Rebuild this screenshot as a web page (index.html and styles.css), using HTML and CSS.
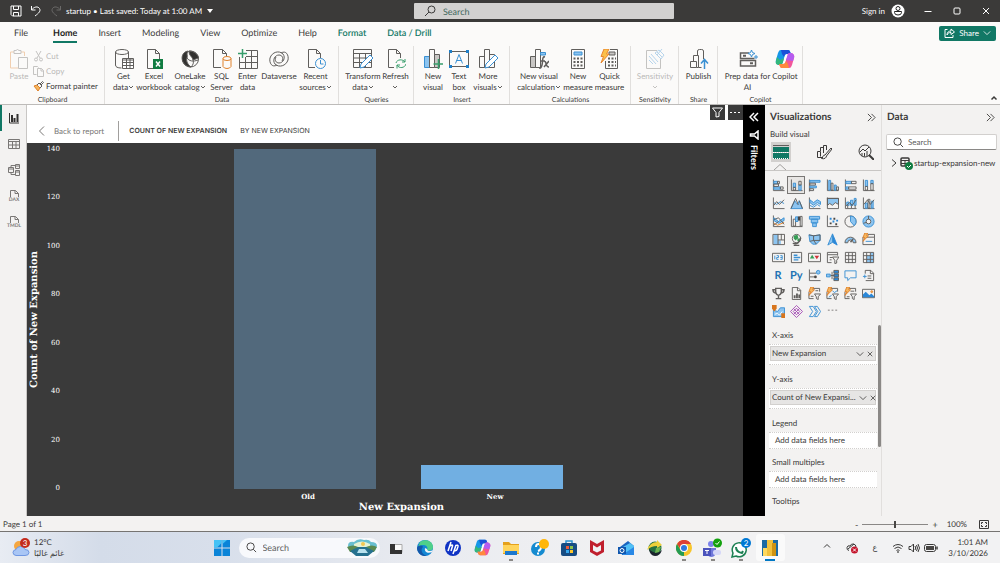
FILE: index.html
```html
<!DOCTYPE html>
<html lang="en">
<head>
  <meta charset="UTF-8">
  <title>startup - Power BI Desktop</title>
  <link rel="stylesheet" href="styles.css">
</head>
<body>
  <!-- shared icon shapes -->
  <svg class="defs" aria-hidden="true">
    <symbol id="chev" viewBox="0 0 6 6"><path d="M1 2l2 2 2-2"/></symbol>
    <symbol id="chev-l" viewBox="0 0 10 10"><path d="M1 3l4 4 4-4"/></symbol>
    <symbol id="cross" viewBox="0 0 8 8"><path d="M1 1l6 6M7 1l-6 6"/></symbol>
    <symbol id="right2" viewBox="0 0 10 10"><path d="M1 1l4 4-4 4M5 1l4 4-4 4"/></symbol>
    <symbol id="lens" viewBox="0 0 12 12"><circle cx="5" cy="5" r="4"/><path d="M8 8l3 3"/></symbol>
    <symbol id="page" viewBox="0 0 20 20"><path d="M3.500.5h8l4 4v15h-12zM11.500.5v4h4"/></symbol>
    <symbol id="copilot" viewBox="0 0 20 20">
      <path fill="#1597e8" d="M6 1h7c2 0 2 2 3 4h-4c-2 0-2 1-3 4l-1 4c-1 2-1 3-3 3-3 0-5-2-4-5l2-7c1-2 1-3 3-3z"/>
      <path fill="#34b77c" d="M2 8l-1 4c-1 3 1 4 4 4 2 0 2-1 3-3l1-4-4 2z"/>
      <path fill="#1b50d8" d="M6 1h7c2 0 2 2 3 4h-4c-2 0-2 0-3 3L7 5z"/>
      <path fill="#f2569b" d="M14 19H7c-2 0-2-2-3-4h4c2 0 2-1 3-4l1-4c1-2 1-3 3-3 3 0 5 2 4 5l-2 7c-1 2-1 3-3 3z"/>
      <path fill="#b55cf0" d="M12 7c1-2 1-3 3-3 3 0 5 2 4 5l-1 3-7-1z"/>
      <path fill="#ff8a3c" d="M14 19H7c-2 0-2-2-3-4h4c2 0 2-1 3-3l2 3z"/>
      <path fill="#fff" d="M11 6h1.500l-3 8H8z"/>
    </symbol>
    <symbol id="ax" viewBox="0 0 14 14"><path d="M1.500.5v12h12"/></symbol>
  </svg>

  <header class="titlebar">
    <div class="quick">
      <button aria-label="Save"><svg class="ic" width="12" height="12" viewBox="0 0 12 12"><path d="M1 1h10v10H2.500L1 9.500zM3.500 1v3.500h5V1M3.500 11V7.500h5V11"/></svg></button>
      <button aria-label="Undo"><svg class="ic" width="12" height="12" viewBox="0 0 12 12"><path d="M1.500 1v4h4M1.500 5C4 1.500 8 1 9.500 3.500S9 8 5 11"/></svg></button>
      <button aria-label="Redo" class="off"><svg class="ic" width="12" height="12" viewBox="0 0 12 12"><path d="M10.500 1v4h-4M10.500 5C8 1.500 4 1 2.500 3.500S3 8 7 11"/></svg></button>
      <button class="docname">startup • Last saved: Today at 1:00 AM <svg width="6" height="4" viewBox="0 0 6 4"><path fill="#fff" d="M0 0h6L3 4z"/></svg></button>
    </div>
    <label class="topsearch">
      <svg class="ic" width="12" height="12" viewBox="0 0 12 12"><circle cx="7.500" cy="4.500" r="3.500"/><path d="M5 7l-4 4"/></svg>
      <input type="text" placeholder="Search" aria-label="Search">
    </label>
    <div class="window">
      <button class="signin">Sign in
        <svg width="14" height="14" viewBox="0 0 14 14"><circle cx="7" cy="7" r="6.500" fill="#fff"/><g fill="none" stroke="#222"><circle cx="7" cy="4.500" r="2"/><path d="M3.500 7.500h7v1q0 2.500-3.500 2.500T3.500 8.500z"/></g></svg>
      </button>
      <button aria-label="Minimize"><svg class="ic" width="8" height="8" viewBox="0 0 8 8"><path d="M.5 4.500h7"/></svg></button>
      <button aria-label="Maximize"><svg class="ic" width="8" height="8" viewBox="0 0 8 8"><rect x="1" y="1" width="6" height="6" rx="1"/></svg></button>
      <button aria-label="Close"><svg class="ic" width="8" height="8"><use href="#cross"/></svg></button>
    </div>
  </header>

  <nav class="tabs">
    <a href="#" class="file">File</a>
    <a href="#" class="current">Home</a>
    <a href="#">Insert</a>
    <a href="#">Modeling</a>
    <a href="#">View</a>
    <a href="#">Optimize</a>
    <a href="#">Help</a>
    <a href="#" class="context">Format</a>
    <a href="#" class="context">Data / Drill</a>
    <button class="share">
      <svg class="ic" width="11" height="10" viewBox="0 0 11 10"><path d="M3.500 1.500H1v8h8V7M3 7c0-3 2-4 4-4V1l3.500 3L7 6.500v-2C5 4.500 4 5 3 7z"/></svg>
      Share
      <svg class="ic" width="8" height="8"><use href="#chev-l"/></svg>
    </button>
  </nav>

  <section class="ribbon">
    <div class="group clipboard">
      <div class="tools">
        <button class="off">
          <svg class="ic" width="20" height="20" viewBox="0 0 20 20"><path class="orange" d="M5 3H1.500v16H9M12 3h3.500v4"/><path d="M5 1.500h2q1.500-2 3 0h2v3H5zM9.500 8.500h9v11h-9z"/></svg>
          <span>Paste</span>
        </button>
        <div class="small">
          <button class="off"><svg class="ic" width="11" height="11" viewBox="0 0 11 11"><path d="M3 0l4 7M8 0L4 7"/><circle cx="3" cy="8.500" r="1.500"/><circle cx="8" cy="8.500" r="1.500"/></svg>Cut</button>
          <button class="off"><svg class="ic" width="11" height="11" viewBox="0 0 11 11"><path d="M3.500 8.500h-3v-8h4l1 1M4.500 2.500h4l2 2v6h-6zM8 2.500v2.500h2.500"/></svg>Copy</button>
          <button><svg class="ic" width="11" height="11" viewBox="0 0 11 11"><path class="orange forange" d="M1 5l3-1 3 3-2 3z"/><path d="M4 4l2-2 3 3-2 2M7 3l2.500-2.500 1 1L8 4"/></svg>Format painter</button>
        </div>
      </div>
      <p>Clipboard</p>
    </div>

    <div class="group data">
      <div class="tools">
        <button><svg class="ic" width="20" height="20" viewBox="0 0 20 20"><ellipse cx="8" cy="3" rx="6.500" ry="2.500"/><path d="M1.500 3v13q0 3 6 3M14.500 3v6"/><path fill="#fff" d="M8.500 9.500h11v10h-11z"/><path d="M8.500 11h11M8.500 13.500h11M8.500 16.500h11M12.500 10v9M16 10v9"/></svg><span>Get<br>data<svg class="ic" width="6" height="6"><use href="#chev"/></svg></span></button>
        <button><svg class="ic" width="20" height="20" viewBox="0 0 20 20"><use href="#page"/><path fill="#107c41" stroke="none" d="M9 10h10v10H9z"/><path stroke="#fff" stroke-width="1.500" d="M12 12.500l4 5M16 12.500l-4 5"/></svg><span>Excel<br>workbook</span></button>
        <button><svg class="ic" width="20" height="20" viewBox="0 0 20 20"><circle cx="10.500" cy="10" r="8"/><path fill="#323130" d="M8 2C2 3 1 9 3 13c1 3 5 5 8 5-4-3-5-7-4-9s-1-4 1-7zM9 2c5 0 9 3 9.500 7L13 11c-1-4-4-4-4-9z"/><path d="M7 9c2 3 6 4 11 2M13 11c1 3 0 5-2 7"/></svg><span>OneLake<br>catalog<svg class="ic" width="6" height="6"><use href="#chev"/></svg></span></button>
        <button><svg class="ic" width="20" height="20" viewBox="0 0 20 20"><path d="M9 18.500H1.500V.5h9l4 4V7M10.500.5v4h4"/><g class="orange"><ellipse cx="15" cy="9.500" rx="4" ry="2"/><path d="M11 9.500v8q1 2 4 2t4-2v-8"/></g></svg><span>SQL<br>Server</span></button>
        <button><svg class="ic" width="20" height="20" viewBox="0 0 20 20"><path d="M8 1.500h11.500v18H1.500V8M1.500 13.500h18M8 7.500h11.500M7.500 8v11.500M13.500 2v17.500"/><path class="green" stroke-width="1.500" d="M4.500 0v9M0 4.500h9"/></svg><span>Enter<br>data</span></button>
        <button><svg class="ic" width="20" height="20" viewBox="0 0 20 20"><path d="M8 16C3 19 0 14 1 9c2-6 9-8 13-4 3 4 0 9-4 9-3 0-5-3-3-6M12 4c5-3 8 2 7 7-2 6-9 8-13 4-3-4 0-9 4-9 3 0 5 3 3 6"/></svg><span>Dataverse</span></button>
        <button><svg class="ic" width="20" height="20" viewBox="0 0 20 20"><path d="M9 18.500H2.500V.5h8l4 4V9M10.500.5v4h4"/><circle class="blue" cx="14.500" cy="14.500" r="5"/><path class="blue" d="M14.500 11v4h3"/></svg><span>Recent<br>sources<svg class="ic" width="6" height="6"><use href="#chev"/></svg></span></button>
      </div>
      <p>Data</p>
    </div>

    <div class="group queries">
      <div class="tools">
        <button><svg class="ic" width="20" height="20" viewBox="0 0 20 20"><path d="M.5.5h18v18H.5zM.5 4.500h18M.5 9h18M.5 13.500h18M6.500 4v14M12.500 4v14"/><path class="blue" fill="#fff" d="M7 19l1-4 9-9 3 3-9 9z"/></svg><span>Transform<br>data<svg class="ic" width="6" height="6"><use href="#chev"/></svg></span></button>
        <button><svg class="ic" width="20" height="20" viewBox="0 0 20 20"><path d="M8 18.500H2.500V.5h8l4 4V9M10.500.5v4h4"/><path class="green" d="M10 14c1-4 7-4 9-1V10M19 13h-3M20 15c-1 4-7 5-9 1v3.500M11 16h3"/></svg><span>Refresh<br><svg class="ic" width="6" height="6"><use href="#chev"/></svg></span></button>
      </div>
      <p>Queries</p>
    </div>

    <div class="group insert">
      <div class="tools">
        <button><svg class="ic" width="20" height="20" viewBox="0 0 20 20"><path class="blue fblue" d="M1.500 7.500h5v11h-5z"/><path d="M6.500.5h5v18h-5z"/><path fill="#c8c6c4" d="M11.500 5.500h5v13h-5z"/><path class="green" stroke-width="1.500" d="M15.500 10v10M10.500 15h10"/></svg><span>New<br>visual</span></button>
        <button><svg class="ic" width="20" height="20" viewBox="0 0 20 20"><path d="M.5 2.500h19v15H.5z"/><path class="blue" d="M6.500 14.500l3.500-9 3.500 9M7.500 11.500h5"/><path fill="#1f7fc8" stroke="none" d="M0 1h3v3H0zM17 1h3v3h-3zM0 16h3v3H0zM17 16h3v3h-3z"/></svg><span>Text<br>box</span></button>
        <button><svg class="ic" width="20" height="20" viewBox="0 0 20 20"><path d="M1.500 7.500h5v11h-5zM6.500.5h5v18h-5zM11.500 5.500h5v13h-5z"/><path class="blue" fill="#fff" d="M7 19l1-4 9-9 3 3-9 9z"/></svg><span>More<br>visuals<svg class="ic" width="6" height="6"><use href="#chev"/></svg></span></button>
      </div>
      <p>Insert</p>
    </div>

    <div class="group calc">
      <div class="tools">
        <button><svg class="ic" width="20" height="20" viewBox="0 0 20 20"><path fill="#c8c6c4" d="M1.500 7.500h5v11h-5z"/><path d="M6.500.5h5v18h-5z"/><path class="blue fblue" d="M11.500 3.500h5V6h-5z"/><path stroke-width="1.500" d="M16 8c-3-1-2 4-3 8s-2 3-3 3M11 12h5M15 12c3 0 1 6 5 6M20 12l-5 6"/></svg><span>New visual<br>calculation<svg class="ic" width="6" height="6"><use href="#chev"/></svg></span></button>
        <button><svg class="ic" width="20" height="20" viewBox="0 0 20 20"><path d="M3.500.5h13v19h-13z"/><path class="fblue blue" d="M6 3h8v3H6z"/><path stroke-width="2" stroke-dasharray="2 1.500" d="M5.500 9.500h9M5.500 13h9M5.500 16.500h9"/></svg><span>New<br>measure</span></button>
        <button><svg class="ic" width="20" height="20" viewBox="0 0 20 20"><path d="M10 .5h7.500v19h-12V12"/><path fill="#c8c6c4" d="M9 3h6v3H9z"/><path stroke-width="2" stroke-dasharray="2 1.500" d="M8 9.500h8M8 13h8M8 16.500h8"/><path fill="#fbc04a" stroke="#e8862e" d="M4 0h5L6.500 5H9l-8 9 2.500-6.500H1z"/></svg><span>Quick<br>measure</span></button>
      </div>
      <p>Calculations</p>
    </div>

    <div class="group sens">
      <div class="tools">
        <button class="off"><svg class="ic" width="20" height="20" viewBox="0 0 20 20"><path d="M12 1.500H1.500v18h14V10"/><path class="blue" d="M4 7l7 8M6 5l7 8M4 11l4 4M10 4l4-3 5 5-3 4zM12 3l5 5M14 1l5 5M17 0l-5 6"/></svg><span>Sensitivity<br><svg class="ic" width="6" height="6"><use href="#chev"/></svg></span></button>
      </div>
      <p>Sensitivity</p>
    </div>

    <div class="group pub">
      <div class="tools">
        <button><svg class="ic" width="20" height="20" viewBox="0 0 20 20"><path d="M1.500 12.500h6v6h-6zM4.500 12V6.500h5v12h-2M8.500 6V2q0-1.500 2-1.500h2q2 0 2 1.500v8M9.500 18.500h3"/><path class="blue" stroke-width="1.500" d="M15.500 20v-9M12 14.500l3.500-4 3.500 4"/></svg><span>Publish</span></button>
      </div>
      <p>Share</p>
    </div>

    <div class="group cop">
      <div class="tools">
        <button><svg class="ic" width="20" height="20" viewBox="0 0 20 20"><path stroke-width="1.500" d="M11 4H2.500v5.500h14M2.500 11.500h15V17h-15z"/><path d="M5 6.800h3M12 14.200h3" stroke-width="2"/><path class="blue" d="M13.500 1l1 2.500L17 4.500l-2.500 1-1 2.500-1-2.500-2.500-1 2.500-1zM18 6v4M16 8h4"/></svg><span>Prep data for<br>AI</span></button>
        <button><svg width="20" height="20"><use href="#copilot"/></svg><span>Copilot</span></button>
      </div>
      <p>Copilot</p>
    </div>
    <button class="collapse" aria-label="Collapse ribbon"><svg class="ic" width="8" height="8" viewBox="0 0 8 8"><path stroke-width="1.500" d="M1.500 5.500L4 3l2.500 2.500"/></svg></button>
  </section>

  <main class="workspace">
    <nav class="views">
      <a href="#" class="on" aria-label="Report view"><svg class="ic" width="12" height="12" viewBox="0 0 12 12"><path d="M1.500 1v10H11"/><path stroke-width="2" d="M4 3v7M6.500 6v4M9.500 2v8"/></svg></a>
      <a href="#" aria-label="Table view"><svg class="ic" width="12" height="12" viewBox="0 0 12 12"><path d="M.5 1.500h11v9H.5zM.5 3.500h11M.5 7h11M4.500 3v8M8 3v8"/></svg></a>
      <a href="#" aria-label="Model view"><svg class="ic" width="12" height="12" viewBox="0 0 12 12"><path d="M.5 3.500h5v5h-5zM.5 5h5M7.500.5h4v4h-4zM7.500 2h4M7.500 6.500h4v5h-4zM7.500 8h4M3 3V1.500h4M3 9v1.500h4"/></svg></a>
      <a href="#" aria-label="DAX query view"><svg class="ic" width="12" height="8" viewBox="0 0 12 8"><path d="M2.500 7V.5h5l3 3V7M7 .5v3h3.500"/></svg><b>DAX</b></a>
      <a href="#" aria-label="TMDL view"><svg class="ic" width="12" height="8" viewBox="0 0 12 8"><path d="M2.500 7V.5h5l3 3V7M7 .5v3h3.500"/></svg><b>TMDL</b></a>
    </nav>

    <section class="report">
      <div class="focusbar">
        <button class="back"><svg class="ic" width="8" height="10" viewBox="0 0 8 10"><path d="M6 .5L1.500 5 6 9.500"/></svg>Back to report</button>
        <h1>COUNT OF NEW EXPANSION</h1>
        <h2>BY NEW EXPANSION</h2>
        <div class="visual-tools">
          <button aria-label="Filters on visual"><svg class="ic" width="11" height="11" viewBox="0 0 11 11"><path d="M.5 1h10L7 5.500v4L4 10V5.500z"/></svg></button>
          <button aria-label="More options"><svg width="11" height="11" viewBox="0 0 11 11"><path fill="#fff" d="M0 5h2v1H0zM4 5h2v1H4zM8 5h2v1H8z"/></svg></button>
        </div>
      </div>
      <div class="chart">
        <div class="ytitle">Count of New Expansion</div>
        <ol class="ticks"><li>140</li><li>120</li><li>100</li><li>80</li><li>60</li><li>40</li><li>20</li><li>0</li></ol>
        <div class="plot">
          <div class="bar dim" style="height:100%"></div>
          <div class="bar" style="height:7.14%"></div>
        </div>
        <div class="xlabels"><span>Old</span><span>New</span></div>
        <div class="xtitle">New Expansion</div>
      </div>
    </section>

    <aside class="filters">
      <button aria-label="Expand filters"><svg class="ic" width="10" height="10" viewBox="0 0 10 10"><path stroke-width="1.500" d="M5 1L1 5l4 4M9 1L5 5l4 4"/></svg></button>
      <svg class="ic" width="10" height="10" viewBox="0 0 10 10"><path stroke-width="1.500" d="M9 1v8L5.500 6H1.500V4h4z"/></svg>
      <h3>Filters</h3>
    </aside>

    <aside class="viz">
      <div class="panehead"><h3>Visualizations</h3><button aria-label="Collapse"><svg class="ic" width="9" height="9"><use href="#right2"/></svg></button></div>
      <h4>Build visual</h4>
      <div class="modes">
        <button class="on" aria-label="Build visual"><svg width="16" height="16" viewBox="0 0 16 16"><path fill="#117865" d="M0 3h16v5H0zM0 9h16v6H0z"/><path stroke="#605e5c" d="M0 1.500h16"/><path stroke="#fff" stroke-dasharray="1 1" d="M0 8.500h16M0 14.500h16"/></svg></button>
        <button aria-label="Format visual"><svg class="ic" width="16" height="16" viewBox="0 0 16 16"><path d="M7 13.500H1.500v-6h3v5M4.500 7V3.500h3V9M7.500 5V1.500h3V6M15 4L9 11c-2 0-2 2-3.500 3.500 3 1 5-1 5-2.500L16 5z"/></svg></button>
        <button aria-label="Analytics"><svg class="ic" width="16" height="16" viewBox="0 0 16 16"><circle cx="7" cy="7" r="6"/><path d="M2 8l3-3 2 2 4-4M4 12V9M6.500 12.500V9M9 12V7"/><path stroke-width="2" d="M11 11l5 5"/></svg></button>
      </div>
      <svg class="notch ic" width="18" height="6" viewBox="0 0 18 6"><path fill="#f3f2f1" d="M3 6l6-5.500L15 6"/></svg>
      <div class="gallery">
        <button><svg class="ic" viewBox="0 0 14 14"><use href="#ax"/><path class="fblue blue" d="M2 2.500h4v2.500H2zM2 8.500h7V11H2z"/><path d="M6 2.500h2V5H6zM2 5.500h5V8H2zM9 8.500h3V11H9z"/></svg></button>
        <button class="on"><svg class="ic" viewBox="0 0 14 14"><use href="#ax"/><path class="fblue blue" d="M3.500 4.500H6V9H3.500zM9.500 6.500H12V12H9.500z"/><path d="M3.500 9H6v3H3.500zM9.500 2.500H12v4H9.500z"/></svg></button>
        <button><svg class="ic" viewBox="0 0 14 14"><path d="M1.500.5v13"/><path class="fblue blue" d="M2 1.500h11v2H2zM2 7.500h7v2H2z"/><path d="M2 4.500h6v2H2zM2 10.500h4v2H2z"/></svg></button>
        <button><svg class="ic" viewBox="0 0 14 14"><use href="#ax"/><path class="fblue blue" d="M3 1.500h2V12H3zM9 6.500h2V12H9z"/><path d="M5.500 4.500h2V12h-2zM11.500 8.500h2V12h-2z"/></svg></button>
        <button><svg class="ic" viewBox="0 0 14 14"><use href="#ax"/><path class="fblue blue" d="M2 2.500h6V5H2zM2 8.500h3V11H2z"/><path d="M8 2.500h5V5H8zM5 8.500h8V11H5z"/></svg></button>
        <button><svg class="ic" viewBox="0 0 14 14"><use href="#ax"/><path class="fblue blue" d="M3.500 1.500H6V8H3.500zM9.500 1.500H12V5H9.500z"/><path d="M3.500 8H6v4H3.500zM9.500 5H12v7H9.500z"/></svg></button>

        <button><svg class="ic" viewBox="0 0 14 14"><use href="#ax"/><path class="blue" d="M2 6l3 2 4-3 4 2"/><path d="M2 9l3-4 3 3 5-5"/></svg></button>
        <button><svg class="ic" viewBox="0 0 14 14"><path class="fblue blue" d="M1 12.500L5 4l3 4 2-4 3.500 8.500z"/><path d="M1 12.500L6 1.500l3 7M13.500 12.500L10 4"/></svg></button>
        <button><svg class="ic" viewBox="0 0 14 14"><use href="#ax"/><path class="fblue blue" d="M2 3l4 3 4-3 3.500 2v3L10 6 6 9 2 6z"/><path class="blue" d="M2 9l4 2 4-3 3 2"/></svg></button>
        <button><svg class="ic" viewBox="0 0 14 14"><path class="fblue" d="M1.500 1.500h12V8L10 6l-3 3-3-2-2.500 2z"/><use href="#ax"/><path d="M1 1.500h12.500v11"/></svg></button>
        <button><svg class="ic" viewBox="0 0 14 14"><use href="#ax"/><path class="fblue blue" d="M3 5.500h2.500V9H3zM7 3.500h2.500V9H7zM11 1.500h2V9h-2z"/><path d="M2 10l4-4 3 3 4-6M4 9v3M8 9v3M12 9v3"/></svg></button>
        <button><svg class="ic" viewBox="0 0 14 14"><use href="#ax"/><path class="fblue blue" d="M3.500 6.500H6V12H3.500zM10 4.500h2V12h-2z"/><path d="M6.500 2.500h2V12h-2zM2 8l4-5 3 5 4-5"/></svg></button>

        <button><svg class="ic" viewBox="0 0 14 14"><use href="#ax"/><path class="fblue blue" d="M2 3l5 4 6-4v3L7 9 2 6z"/><path class="orange" d="M2 9l4 2 7-3"/><path d="M2 5l5-2 6 7M2 11l5-4"/></svg></button>
        <button><svg class="ic" viewBox="0 0 14 14"><use href="#ax"/><path d="M3.500 4.500H6V12H3.500zM11 1.500h2V12h-2z"/><path class="fblue blue" d="M6 2h2.500v5H6z"/><path class="solid" d="M8.500 1.500H11V6H8.500z"/></svg></button>
        <button><svg class="ic" viewBox="0 0 14 14"><path class="fblue blue" d="M1.500 1.500h11v3h-11zM3.500 4.500h7v4h-7zM5 8.500h4v4H5z"/></svg></button>
        <button><svg class="ic" viewBox="0 0 14 14"><use href="#ax"/><path class="solid" d="M4 8h2v2H4zM8 3h2v2H8zM10 9h2v2h-2z"/><path fill="#2b88d8" stroke="none" d="M4 3h2v2H4zM7 6h2v2H7zM11 5h2v2h-2z"/></svg></button>
        <button><svg class="ic" viewBox="0 0 14 14"><circle cx="7" cy="7" r="6"/><path class="fblue blue" d="M7 7V1a6 6 0 0 1 4 10.500z"/></svg></button>
        <button><svg class="ic" viewBox="0 0 14 14"><circle class="fblue blue" cx="7" cy="7" r="6"/><circle cx="7" cy="7" r="2.500" fill="#f3f2f1"/><path d="M7 1v3.500M1.500 9l3-1"/></svg></button>

        <button><svg class="ic" viewBox="0 0 14 14"><path class="fblue" stroke="none" d="M1.500 1.500h5v11h-5zM6.500 8h3v4.500h-3z"/><path d="M1 1.500h12.500v11H1zM6.500 1v11.500M6.500 7.500h7M10 1v6.500"/></svg></button>
        <button><svg class="ic" viewBox="0 0 14 14"><circle cx="7" cy="6" r="4.500"/><path fill="#379d55" stroke="none" d="M4 3l4-1 1 3-3 3-2-2zM8 6l3 0-1 3-2 0z"/><path stroke-width="1.500" d="M3 11c4 2 8-1 8.500-6M4 13.500h6"/></svg></button>
        <button><svg class="ic" viewBox="0 0 14 14"><path class="fblue blue" d="M1 2l5 1 7-1v6l-4 4H5L2 9z"/><path d="M1 2l5 1v5l-4 1M6 3l7-1v6H6l3 4"/></svg></button>
        <button><svg class="ic" viewBox="0 0 14 14"><path fill="#2b88d8" stroke="#2b88d8" d="M7 1l5 12-5-3z"/><path class="fblue blue" d="M7 1L2 13l5-3z"/></svg></button>
        <button><svg class="ic" viewBox="0 0 14 14"><path class="fblue" d="M1 10.500a6 6 0 0 1 12 0h-3a3 3 0 0 0-6 0z"/><path stroke-width="1.500" d="M7 10l3-4"/></svg></button>
        <button><svg class="ic" viewBox="0 0 14 14"><path d="M1 4.500h12.500v8H1zM6 1.500h7.500v3"/><path class="blue" d="M4 9h7"/><path class="orange forange" d="M3 0h3L5 3h2L1 9l2-4H1z"/></svg></button>

        <button><svg class="ic" viewBox="0 0 14 14"><path d="M.5 2.500h13v9H.5z"/><path class="blue" d="M3 5v4M5 5h2v2H5v2h2M9 5h2v4H9M9 7h2"/></svg></button>
        <button><svg class="ic" viewBox="0 0 14 14"><path d="M1.500 1.500h11v11h-11z"/><path class="blue" stroke-width="1.500" d="M4 4.500h4M4 7h7M4 9.500h5"/></svg></button>
        <button><svg class="ic" viewBox="0 0 14 14"><path d="M.5 2.500h13v9H.5z"/><path fill="#379d55" stroke="none" d="M2 8l2.500-4L7 8z"/><path fill="#d13438" stroke="none" d="M7 5h5L9.500 9z"/></svg></button>
        <button><svg class="ic" viewBox="0 0 14 14"><path d="M6 12.500H1.500v-11h11V5M2 4h10M4 7h3M4 9.500h2M7 6.500h7L11.500 10v3l-2 .5V10z"/></svg></button>
        <button><svg class="ic" viewBox="0 0 14 14"><path d="M1.500 1.500h11v11h-11zM1.500 5h11M1.500 9h11M5 2v11M9 2v11"/></svg></button>
        <button><svg class="ic" viewBox="0 0 14 14"><path class="fblue" stroke="none" d="M5 5h4v7.500H5zM9 1.500h3.500v11H9z"/><path d="M1.500 1.500h11v11h-11zM1.500 5h11M1.500 9h11M5 2v11M9 2v11"/></svg></button>

        <button class="letter">R</button>
        <button class="letter">Py</button>
        <button><svg class="ic" viewBox="0 0 14 14"><use href="#ax"/><path d="M2 4.500h7M2 8.500h5"/><circle class="fblue blue" cx="11" cy="3.500" r="2"/><circle class="solid" cx="8" cy="8.500" r="1.500"/></svg></button>
        <button><svg class="ic" viewBox="0 0 14 14"><path class="fblue blue" d="M.5 5.500h4v3h-4z"/><path fill="#2b88d8" d="M8.500 1.500h5v3h-5zM8.500 5.500h5v3h-5zM8.500 9.500h5v3h-5z"/><path d="M5 7h4M6.500 3v8"/></svg></button>
        <button><svg class="ic" viewBox="0 0 14 14"><path class="blue" d="M1 2h12v7.500H7L4 12.500v-3H1z"/></svg></button>
        <button><svg class="ic" viewBox="0 0 14 14"><path d="M4 12.500h8.500v-8l-3-3h-6V5M9 1.500v3.500h3.500M6 7.500h4M6 10h4"/><path class="blue" d="M1 8h4M3 6v4"/></svg></button>

        <button><svg class="ic" viewBox="0 0 14 14"><path stroke-width="1.500" d="M4 1.500h6v4q-.5 3-3 3.500-2.500-.5-3-3.500zM4 3H1q0 3 3 3.500M10 3h3q0 3-3 3.500M7 9v3M4 12.500h6"/></svg></button>
        <button><svg class="ic" viewBox="0 0 14 14"><path d="M2.500.5h6l3 3v10h-9zM8 .5v3.500h3.500"/><path stroke-width="2" d="M5 12V9M7.500 12V7M10 12V8"/></svg></button>
        <button><svg class="ic" viewBox="0 0 14 14"><path d="M1 5.500v7h5M5 1.500h7.500V5M7 7.500h6.500L11 10.500v3l-2-1v-2zM8 4h3M3 10h3"/><path class="orange forange" d="M3 0h3L5 3h2L1 9l2-4H1z"/></svg></button>
        <button><svg class="ic" viewBox="0 0 14 14"><path d="M1 5.500v7h5M5 1.500h7.500V5M7 7.500h6.500L11 10.500v3l-2-1v-2z"/><path class="blue" d="M7 4l2 2 3-2M3 11l3-2"/><path class="orange forange" d="M3 0h3L5 3h2L1 9l2-4H1z"/></svg></button>
        <button><svg class="ic" viewBox="0 0 14 14"><path d="M1 5.500v7h5M5 1.500h7.500V5M7 7.500h6.500L11 10.500v3l-2-1v-2zM7 4.500h4M3 10.500h3"/><path class="orange forange" d="M3 0h3L5 3h2L1 9l2-4H1z"/></svg></button>
        <button><svg class="ic" viewBox="0 0 14 14"><path d="M.5 2.500h13v9H.5z"/><path fill="#2b88d8" stroke="none" d="M1 11V8l3-3 4 4 2-2 3 3v1z"/><circle cx="10.500" cy="5" r="1" class="forange orange"/></svg></button>

        <button><svg class="ic" viewBox="0 0 14 14"><path class="blue fblue" d="M1.500 5.500L6 7l3-4h4.500v9.500h-12z"/><path stroke="#fff" d="M3 10l3-1 2 2 3-4"/><path fill="#d8761d" stroke="none" d="M0 0h5v4L2.500 7 0 4zM10 9h4v5h-4z"/></svg></button>
        <button><svg class="ic" viewBox="0 0 14 14"><path stroke="#a54fb5" d="M7 .5L13.500 7 7 13.500.5 7zM3.500 7L7 3.500 10.500 7 7 10.500zM4 4l6 6M10 4l-6 6"/></svg></button>
        <button><svg class="ic" viewBox="0 0 14 14"><path class="blue" d="M1.500 1.500h4L9 7l-3.500 5.500h-4L5 7zM7 1.500h3L13.500 7 10 12.500H7L10.500 7z"/></svg></button>
        <button><svg viewBox="0 0 14 14"><path fill="#605e5c" d="M2 5h2v1H2zM6 5h2v1H6zM10 5h2v1h-2z"/></svg></button>
      </div>
      <div class="wells">
        <h5>X-axis</h5>
        <div class="well"><div class="chip"><span>New Expansion</span><button aria-label="Field options"><svg class="ic" width="8" height="8"><use href="#chev-l"/></svg></button><button aria-label="Remove"><svg class="ic" width="6" height="6" viewBox="0 0 8 8"><use href="#cross" width="8" height="8"/></svg></button></div></div>
        <h5>Y-axis</h5>
        <div class="well"><div class="chip"><span>Count of New Expansi...</span><button aria-label="Field options"><svg class="ic" width="8" height="8"><use href="#chev-l"/></svg></button><button aria-label="Remove"><svg class="ic" width="6" height="6" viewBox="0 0 8 8"><use href="#cross" width="8" height="8"/></svg></button></div></div>
        <h5>Legend</h5>
        <div class="well empty">Add data fields here</div>
        <h5>Small multiples</h5>
        <div class="well empty">Add data fields here</div>
        <h5>Tooltips</h5>
        <div class="scrollbar"></div>
      </div>
    </aside>

    <aside class="fields">
      <div class="panehead"><h3>Data</h3><button aria-label="Collapse"><svg class="ic" width="9" height="9"><use href="#right2"/></svg></button></div>
      <label class="fieldsearch"><svg class="ic" width="11" height="11"><use href="#lens"/></svg><input type="text" placeholder="Search" aria-label="Search fields"></label>
      <a href="#" class="table"><svg class="ic" width="6" height="8" viewBox="0 0 6 8"><path d="M1 .5L5 4 1 7.500"/></svg>
        <svg class="ic" width="13" height="14" viewBox="0 0 13 14"><rect x="1" y="2" width="8" height="8" rx="1" stroke-width="1.500"/><path d="M1 4.500h8M1 7.500h8M5 4v6"/><circle cx="9" cy="10" r="4" fill="#107c41" stroke="none"/><path stroke="#fff" d="M7 10l1.500 1.500L11 9"/></svg>startup-expansion-new</a>
    </aside>
  </main>

  <footer class="status">
    <span>Page 1 of 1</span>
    <div class="zoom">
      <button aria-label="Zoom out">-</button>
      <input type="range" min="0" max="100" value="50" aria-label="Zoom">
      <button aria-label="Zoom in">+</button>
      <span>100%</span>
      <button aria-label="Fit to page"><svg class="ic" width="10" height="9" viewBox="0 0 10 9"><path d="M.5.5h9v8h-9zM2.500 4V2.500H4M6 2.500h1.500V4M2.500 5v1.500H4M6 6.500h1.500V5"/></svg></button>
    </div>
  </footer>

  <div class="taskbar">
    <button class="weather">
      <svg width="18" height="20" viewBox="0 0 18 20"><circle cx="7" cy="8" r="5" fill="#f5a742"/><path fill="#a9c6f5" stroke="#6f97e2" d="M4 17.500q-3-.5-3-3t3-3q1-3 4.500-3t4.500 3q4 0 4 3t-4 3z"/><circle cx="13" cy="5" r="5" fill="#c42b1c"/><text x="13" y="8" class="badge">3</text></svg>
      <span>12°C<br><bdi lang="ar">غائم غالبًا</bdi></span>
    </button>
    <div class="apps">
      <button aria-label="Start"><svg width="16" height="16" viewBox="0 0 16 16"><path fill="#0a84d8" d="M0 0h7.500v7.500H0zM8.500 0H16v7.500H8.500zM0 8.500h7.500V16H0zM8.500 8.500H16V16H8.500z"/><path fill="#45c2f5" d="M0 0h7.500v3L3 7.500H0zM8.500 0H13L8.500 4z"/></svg></button>
      <label class="tasksearch">
        <svg class="ic" width="11" height="11"><use href="#lens"/></svg>
        <input type="text" placeholder="Search" aria-label="Search Windows">
        <svg width="32" height="18" viewBox="0 0 32 18"><path fill="#69bfd0" d="M2 7q0-5 6-4 4-4 10-2 5-1 7 2 6 0 6 4l-2 5H4z"/><path fill="#e5f2d5" d="M8 5q8-5 16 0v4H8z"/><path fill="#5b8a50" d="M1 8q6-3 11 0l8 0q6-3 11 0l-3 5H4z"/><path fill="#26718f" d="M12 8h8l8 4-6 5H10l-6-5z"/><path fill="#b9e2ee" d="M13 10h6l3 4H11z"/><circle cx="17" cy="5" r="2" fill="#f1c751"/></svg>
      </label>
      <div class="pinned">
        <button aria-label="Task view"><svg width="16" height="16" viewBox="0 0 16 16"><path fill="#fafafa" stroke="#aaa" d="M5 4.500h9v8H5z"/><path fill="#333" d="M2 4h5v6h7v4H2z"/></svg></button>
        <button aria-label="Edge"><svg width="16" height="16" viewBox="0 0 16 16"><circle cx="8" cy="8" r="8" fill="#1387d4"/><path fill="#4fd08a" d="M3 2c5-4 13-1 13 5 0 4-4 4-6 3 2-4-3-7-9-3z"/><path fill="#1557a8" d="M6 7c-3 3-1 8 4 9-6 1-10-4-10-8 1-3 5-3 6-1z"/><path fill="#f2f4f7" d="M8 8c-1 4 3 6 7 4l1-2c-3 2-6 1-6-1z"/></svg></button>
        <button aria-label="HP"><svg width="16" height="16" viewBox="0 0 16 16"><circle cx="8" cy="8" r="8" fill="#1033c4"/><path fill="none" stroke="#fff" stroke-width="1.500" d="M6 2L3 11M5 6q3-2 2.500 0L6 11M11 5L8 14M10.500 5.500q3-1 2.500 1l-1 3q-.5 1.500-3 1"/></svg></button>
        <button aria-label="Copilot"><svg width="17" height="17"><use href="#copilot"/></svg></button>
        <button class="run" aria-label="File Explorer"><svg width="16" height="16" viewBox="0 0 16 16"><path fill="#e5a11c" d="M0 2h6l2 2h8v10H0z"/><path fill="#ffd45b" d="M0 5h16v8H0z"/><path fill="#1b78cf" d="M2 11h12v4H2z"/></svg></button>
        <button aria-label="Get Help"><svg width="18" height="18" viewBox="0 0 18 18"><circle cx="7" cy="10" r="7" fill="#158bd0"/><path fill="none" stroke="#fff" stroke-width="2" d="M5 8q0-3 2.500-3T10 8t-3 4M7 13.500v2"/><circle cx="13" cy="5" r="5" fill="#ffb60a"/></svg></button>
        <button aria-label="Store"><svg width="16" height="16" viewBox="0 0 16 16"><path fill="none" stroke="#2d91d0" stroke-width="1.500" d="M5 4V1h6v3"/><rect y="3" width="16" height="13" rx="2" fill="#174c83"/><path fill="#ef5a38" d="M5 6h3v3H5z"/><path fill="#8bc34a" d="M9 6h3v3H9z"/><path fill="#35a7ee" d="M5 10h3v3H5z"/><path fill="#ffc72c" d="M9 10h3v3H9z"/></svg></button>
        <button aria-label="McAfee"><svg width="16" height="16" viewBox="0 0 16 16"><path fill="#c01f2e" d="M1 0l7 4 7-4v12l-7 4-7-4z"/><path fill="#f0f1f4" d="M4 5l4 2.500L12 5v5.500l-4 2-4-2z"/></svg></button>
        <button aria-label="Outlook"><svg width="16" height="16" viewBox="0 0 16 16"><path fill="#1a65c0" d="M2 7l8-6 6 5v9H4z"/><path fill="#51c0f6" d="M5 7l7-4 4 3v3L5 15z"/><path fill="#2888e6" d="M4 15l12-8v8z"/><path fill="#0f56ae" d="M0 7h8v7H0z"/><circle cx="4" cy="10.500" r="2" fill="none" stroke="#fff"/></svg></button>
        <button aria-label="Download Manager"><svg width="16" height="16" viewBox="0 0 16 16"><circle cx="8" cy="8" r="6.500" fill="#257040"/><path fill="#1c242d" d="M2 9q7 7 13 1-2 6-7 6t-6-7z"/><path fill="#eed03b" d="M0 10Q3 2 10 2v-2l5 5-5 3V6Q4 6 0 10z"/><path fill="#6eb550" d="M9 8l5-1-2 5-4 1z"/></svg></button>
        <button class="run" aria-label="Chrome"><svg width="16" height="16" viewBox="0 0 16 16"><circle cx="8" cy="8" r="8" fill="#f7c52b"/><path fill="#dd3f34" d="M1 4a8 8 0 0 1 14 0H8L5 9.500z"/><path fill="#249b54" d="M1 4l3.500 6L8 12l0 4A8 8 0 0 1 1 4z"/><circle cx="8" cy="8" r="4" fill="#fff"/><circle cx="8" cy="8" r="3" fill="#3079e0"/></svg></button>
        <button class="run" aria-label="Teams"><svg width="20" height="20" viewBox="0 0 20 20"><circle cx="8" cy="6" r="3" fill="#7b83eb"/><path fill="#7078db" d="M4 10h9v5q-1 4-5 4-4-1-4-4z"/><path fill="#4b53bc" d="M0 10h8v8H0z"/><path stroke="#fff" d="M2 12.500h4M4 12.500V16"/><circle cx="14.500" cy="5" r="4.500" fill="#13a10e"/><path fill="none" stroke="#fff" d="M12.500 5L14 6.500l2.500-3"/><rect x="10" y="12" width="8" height="5" rx="2" fill="#d5d7f8"/></svg></button>
        <button class="run" aria-label="WhatsApp"><svg width="20" height="20" viewBox="0 0 20 20"><path fill="#fff" stroke="#1c8053" stroke-width="1.500" d="M1 19l1-4a7 7 0 1 1 3 3z"/><path fill="none" stroke="#1c8053" stroke-width="2" d="M5 9q0 5 6 6l1-2"/><circle cx="15" cy="5" r="5" fill="#0078d4"/><text x="15" y="8" class="badge">2</text></svg></button>
        <button class="active" aria-label="Power BI"><svg width="16" height="16" viewBox="0 0 16 16"><path fill="#1c6aa3" d="M0 0h16v16H0z"/><path fill="#f2c13c" d="M5 0h6v3h3v13H1V8h4z"/><path fill="#cf9311" d="M10 3h4v13h-4z"/><path fill="#ffd95e" d="M1 8h4v8H1z"/></svg></button>
      </div>
    </div>
    <div class="tray">
      <button aria-label="Hidden icons"><svg class="ic" width="8" height="8" viewBox="0 0 8 8"><path d="M1 5.500l3-3 3 3"/></svg></button>
      <svg class="ic" width="12" height="12" viewBox="0 0 12 12"><path d="M3 8.500Q.5 8 1 5.500T4 4q1-2.500 3.500-2T10 5M2 7l6-5"/><circle cx="8.500" cy="8" r="3.500" fill="#c4142b" stroke="none"/><path stroke="#fff" d="M7 6.500l3 3M10 6.500l-3 3"/></svg>
      <bdi class="lang" lang="ar">ع</bdi>
      <div class="net">
        <svg class="ic" width="12" height="10" viewBox="0 0 12 10"><path d="M1 3.500q5-4 10 0M2.500 5.500q3.500-3 7 0M4.500 7.500q1.500-1.500 3 0"/><circle cx="6" cy="9" r=".5"/></svg>
        <svg class="ic" width="12" height="10" viewBox="0 0 12 10"><path d="M1 3.500h2l2.500-2.500v8L3 6.500H1zM7 3q1.500 2 0 4M8.500 2q2 3 0 6M10 1q3 4 0 8"/></svg>
        <svg class="ic" width="14" height="8" viewBox="0 0 14 8"><rect x=".5" y=".5" width="11" height="7" rx="2"/><path class="solid" d="M2 2h8v4H2z"/><path stroke-width="1.500" d="M13 2.500v3"/></svg>
      </div>
      <time>1:01 AM<br>3/10/2026</time>
    </div>
  </div>
</body>
</html>
```
FILE: styles.css
```css
* {
  box-sizing: border-box;
}
body {
  margin: 0;
  height: 100vh;
  display: flex;
  flex-direction: column;
  overflow: hidden;
  background: #f3f2f1;
  color: #3b3a39;
  font-family: Lato, "Open Sans", "Noto Sans", sans-serif;
  font-size: 8px;
  line-height: 11px;
  text-rendering: geometricPrecision;
}
h1, h2, h3, h4, h5, p, ol {
  margin: 0;
  padding: 0;
  font-weight: normal;
}
button {
  margin: 0;
  padding: 0;
  border: 0;
  background: none;
  color: inherit;
  font: inherit;
  text-rendering: inherit;
}
input {
  min-width: 0;
  border: 0;
  padding: 0;
  background: none;
  font: inherit;
  text-rendering: inherit;
  outline: none;
}
a {
  color: inherit;
  text-decoration: none;
}
svg {
  flex: none;
}
.defs {
  display: none;
}

/* icon strokes and fills */
.ic {
  fill: none;
  stroke: currentColor;
}
.blue { stroke: #3a90d3; }
.green { stroke: #379d6b; }
.orange { stroke: #e0812b; }
.fblue { fill: #8cc4f0; }
.forange { fill: #f5b75e; }
.solid { fill: #484644; stroke: none; }
.badge {
  fill: #fff;
  font-size: 8px;
  text-anchor: middle;
}

/* title bar */
.titlebar {
  flex: none;
  display: grid;
  grid-template-columns: 414fr 260px 326fr;
  align-items: center;
  height: 22px;
  background: #3b3a39;
  color: #fff;
}
.quick {
  display: flex;
  align-items: center;
  gap: 8px;
  padding-left: 10px;
}
.quick button, .window button {
  display: flex;
  align-items: center;
}
.quick .off {
  color: #6b6a69;
}
.quick .docname {
  gap: 5px;
  margin-left: -4px;
}
.topsearch {
  display: flex;
  align-items: center;
  gap: 7px;
  height: 16px;
  padding-left: 10px;
  border-radius: 1px;
  background: #d2d1d0;
  color: #3b3a39;
  font-size: 9px;
}
.topsearch input::placeholder {
  color: #42685d;
  opacity: 1;
}
.window {
  display: flex;
  justify-content: flex-end;
  align-items: center;
  gap: 21px;
  padding-right: 10px;
}
.window .signin {
  gap: 6px;
  margin-right: -2px;
}

/* tabs */
.tabs {
  flex: none;
  display: flex;
  align-items: center;
  gap: 21px;
  height: 22px;
  padding: 0 4px 0 14px;
  background: #fbfaf9;
  font-size: 9px;
}
.tabs .file {
  margin-right: 4px;
}
.tabs a {
  line-height: 17px;
  border-bottom: 2px solid transparent;
}
.tabs .current {
  font-weight: bold;
  color: #252423;
  border-color: #117865;
}
.tabs .context {
  color: #117865;
  font-weight: 600;
}
.share {
  display: flex;
  align-items: center;
  gap: 4px;
  height: 15px;
  margin-left: auto;
  padding: 0 5px;
  border-radius: 2px;
  background: #117865;
  color: #fff;
  font-size: 8px;
}

/* ribbon */
.ribbon {
  flex: none;
  display: flex;
  height: 61px;
  background: #fbfaf9;
  border-bottom: 1px solid #bdbbb9;
}
.group {
  display: flex;
  flex-direction: column;
  justify-content: space-between;
  margin: 2px 0 0;
  padding: 3px 4px 0 5px;
  border-right: 1px solid #e1dfdd;
}
.tools {
  display: grid;
}
.tools > button {
  display: flex;
  flex-direction: column;
  align-items: center;
  justify-content: flex-start;
  gap: 2px;
  white-space: nowrap;
}
.tools .ic {
  color: #605e5c;
}
.tools .off {
  opacity: .35;
}
.group p {
  font-size: 7px;
  line-height: 8px;
  text-align: center;
}
.clipboard .tools {
  grid-template-columns: 28px 67px;
}
.small {
  display: flex;
  flex-direction: column;
}
.small button {
  display: flex;
  align-items: center;
  gap: 2px;
  height: 15px;
  white-space: nowrap;
}
.data .tools { grid-template-columns: 27px 34px 38px 25px 27px 36px 37px; }
.queries .tools { grid-template-columns: 38px 27px; }
.insert .tools { grid-template-columns: 28px 24px 34px; }
.calc .tools { grid-template-columns: 48px 30px 33px; }
.sens .tools { grid-template-columns: 38px; }
.pub .tools { grid-template-columns: 29px; }
.cop .tools { grid-template-columns: 49px 26px; }
.collapse {
  display: flex;
  align-self: flex-end;
  margin: 0 2px 2px auto;
}

/* workspace */
.workspace {
  flex: 1;
  min-height: 0;
  display: grid;
  grid-template-columns: 27px 1fr 22px 117px 118px;
}
.views {
  border-right: 1px solid #c8c6c4;
}
.views a {
  display: flex;
  flex-direction: column;
  align-items: center;
  justify-content: center;
  height: 26px;
  color: #797775;
  border-left: 2px solid transparent;
}
.views .on {
  border-color: #117865;
  color: #323130;
}
.views b {
  font-size: 5px;
  line-height: 4px;
}
.report {
  display: flex;
  flex-direction: column;
  min-width: 0;
  background: #fff;
}
.focusbar {
  flex: none;
  display: flex;
  height: 38px;
  font-family: Inter, Roboto, sans-serif;
}
.focusbar h1, .focusbar h2 {
  font-size: 7px;
  line-height: 51px;
  white-space: nowrap;
}
.focusbar h1 {
  padding-left: 10px;
  margin-right: 13px;
  font-weight: 600;
}
.back {
  display: flex;
  align-items: center;
  gap: 8px;
  height: 20px;
  margin-top: 16px;
  padding: 0 14px 0 11px;
  border-right: 1px solid #a19f9d;
  font-family: Lato, "Open Sans", sans-serif;
  font-size: 8px;
  color: #797775;
}
.visual-tools {
  display: flex;
  gap: 3px;
  margin-left: auto;
}
.visual-tools button {
  display: grid;
  place-items: center;
  width: 15px;
  height: 15px;
  background: #3a3a3a;
  color: #fff;
}

/* chart */
.chart {
  flex: 1;
  min-height: 0;
  display: grid;
  grid-template-columns: 15px 18px 1fr;
  grid-template-rows: 1fr 15px 12px;
  padding-top: 6px;
  background: #3a3a3a;
  color: #fff;
  font-family: Georgia, "DejaVu Serif", serif;
  font-weight: bold;
  font-size: 7px;
}
.ytitle {
  writing-mode: vertical-rl;
  transform: rotate(180deg);
  text-align: center;
  font-size: 10px;
  line-height: 15px;
  white-space: nowrap;
}
.ticks {
  display: flex;
  flex-direction: column;
  justify-content: space-between;
  margin: -5px 0;
  list-style: none;
  text-align: right;
}
.plot {
  display: flex;
  justify-content: center;
  align-items: flex-end;
  gap: 45px;
  padding-right: 7px;
}
.bar {
  width: 142px;
  background: #71afe2;
}
.bar.dim {
  background: #52697c;
}
.xlabels {
  grid-column: 3;
  display: flex;
  justify-content: center;
  gap: 45px;
  line-height: 15px;
}
.xlabels span {
  width: 142px;
  text-align: center;
}
.xtitle {
  grid-column: 3;
  text-align: center;
  font-size: 10px;
  line-height: 8px;
}

/* filters strip */
.filters {
  display: flex;
  flex-direction: column;
  align-items: center;
  gap: 8px;
  padding-top: 7px;
  background: #000;
  color: #fff;
}
.filters button {
  display: flex;
}
.filters h3 {
  margin-top: -3px;
  writing-mode: vertical-rl;
  font-size: 9px;
  font-weight: bold;
}

/* visualizations pane */
.viz {
  display: flex;
  flex-direction: column;
  min-height: 0;
  border-right: 1px solid #e1dfdd;
}
.panehead {
  display: flex;
  justify-content: space-between;
  align-items: center;
  height: 24px;
  padding: 0 5px;
}
.panehead h3 {
  font-size: 10px;
  font-weight: bold;
}
.panehead button {
  display: flex;
}
.viz h4 {
  padding-left: 5px;
  font-size: 8px;
  line-height: 10px;
}
.modes {
  flex: none;
  display: flex;
  justify-content: space-between;
  padding: 3px 5px 0 6px;
}
.modes button {
  display: grid;
  place-items: center;
  width: 20px;
  height: 20px;
}
.modes .on {
  background: #d2d0ce;
}
.notch {
  flex: none;
  width: 100%;
  height: 9px;
  padding: 2px 92px 0 6px;
  border-bottom: 1px solid #c8c6c4;
  color: #a19f9d;
}
.gallery {
  flex: none;
  display: grid;
  grid-template-columns: repeat(6, 1fr);
  margin: 5px 3px 0 4px;
}
.gallery button {
  display: grid;
  place-items: center;
  height: 18px;
  border: 1px solid transparent;
  color: #605e5c;
}
.gallery svg {
  width: 13px;
  height: 13px;
}
.gallery .on {
  border-color: #797775;
  background: #e8e6e4;
}
.gallery .letter {
  color: #2272b4;
  font-size: 11px;
  font-weight: bold;
}
.wells {
  flex: 1;
  min-height: 0;
  position: relative;
  overflow: hidden;
  margin-top: 5px;
  padding: 5px 4px 0;
}
.wells h5 {
  margin-bottom: 3px;
  padding-left: 3px;
  font-size: 8px;
}
.well {
  height: 21px;
  margin-bottom: 9px;
  padding: 1px;
  border: 1px dotted #d2d0ce;
  border-width: 1px 0;
  background: #fff;
}
.well.empty {
  height: 17px;
  margin-bottom: 8px;
  padding: 0 6px;
  line-height: 15px;
}
.chip {
  display: flex;
  align-items: center;
  gap: 3px;
  height: 15px;
  padding: 0 2px 0 1px;
  border: 1px solid #d2d0ce;
  background: #e6e5e4;
  white-space: nowrap;
}
.chip span {
  flex: 1;
}
.chip button {
  display: flex;
}
.scrollbar {
  position: absolute;
  top: 0;
  right: 0;
  width: 3px;
  height: 122px;
  border-radius: 2px;
  background: #8a8886;
}

/* data pane */
.fieldsearch {
  display: flex;
  align-items: center;
  gap: 4px;
  height: 16px;
  margin: 5px 3px 0 4px;
  padding: 0 6px;
  border: 1px solid #d2d0ce;
  border-bottom-color: #8a8886;
  border-radius: 2px;
  background: #fff;
}
.table {
  display: flex;
  align-items: center;
  height: 14px;
  margin-top: 6px;
  padding-left: 9px;
  gap: 3px;
  white-space: nowrap;
}
.table svg + svg {
  margin-right: -2px;
}

/* status bar */
.status {
  flex: none;
  display: flex;
  justify-content: space-between;
  align-items: center;
  height: 16px;
  padding: 1px 11px 0 3px;
  border-bottom: 1px solid #767472;
  font-size: 8px;
}
.zoom {
  display: flex;
  align-items: center;
  gap: 4px;
}
.zoom button {
  display: flex;
  font-size: 9px;
}
.zoom span {
  margin: 0 8px 0 5px;
}
.zoom input {
  appearance: none;
  width: 66px;
  height: 9px;
  margin: 0;
  background: linear-gradient(#8a8886, #8a8886) center / 100% 1px no-repeat;
}
.zoom input::-webkit-slider-thumb {
  appearance: none;
  width: 2px;
  height: 7px;
  background: #484644;
}

/* taskbar */
.taskbar {
  flex: none;
  display: grid;
  grid-template-columns: 1fr auto 1fr;
  height: 31px;
  background: linear-gradient(90deg, #e8ecf3, #d4dce9 10%, #d8dfeb 22%, #e9ebf0 42%, #f2f2f3 65%);
}
.weather {
  display: flex;
  align-items: center;
  gap: 4px;
  padding-left: 12px;
  text-align: left;
}
.apps {
  display: flex;
  align-items: center;
  gap: 2px;
  padding-right: 8px;
}
.apps button {
  display: grid;
  place-items: center;
  width: 29px;
  height: 27px;
}
.tasksearch {
  display: flex;
  align-items: center;
  gap: 6px;
  width: 141px;
  height: 20px;
  padding: 0 2px 0 7px;
  border-radius: 10px;
  background: #f8f9fc;
  font-size: 9px;
}
.tasksearch input {
  flex: 1;
}
input::placeholder {
  color: #605e5c;
  opacity: 1;
}
.pinned {
  display: grid;
  grid-template-columns: repeat(14, 1fr);
  width: 403px;
}
.apps .pinned button {
  width: auto;
}
.apps .run {
  background: linear-gradient(#8a8886, #8a8886) center bottom / 4px 2px no-repeat;
}
.apps .active {
  border-radius: 3px;
  background: linear-gradient(#0078c4, #0078c4) center bottom / 10px 2px no-repeat, #fafafa;
}
.tray {
  display: flex;
  justify-content: flex-end;
  align-items: center;
  gap: 15px;
  padding-right: 12px;
}
.net {
  display: flex;
  align-items: center;
  gap: 4px;
}
.tray time {
  margin-left: -5px;
  text-align: right;
}
```
